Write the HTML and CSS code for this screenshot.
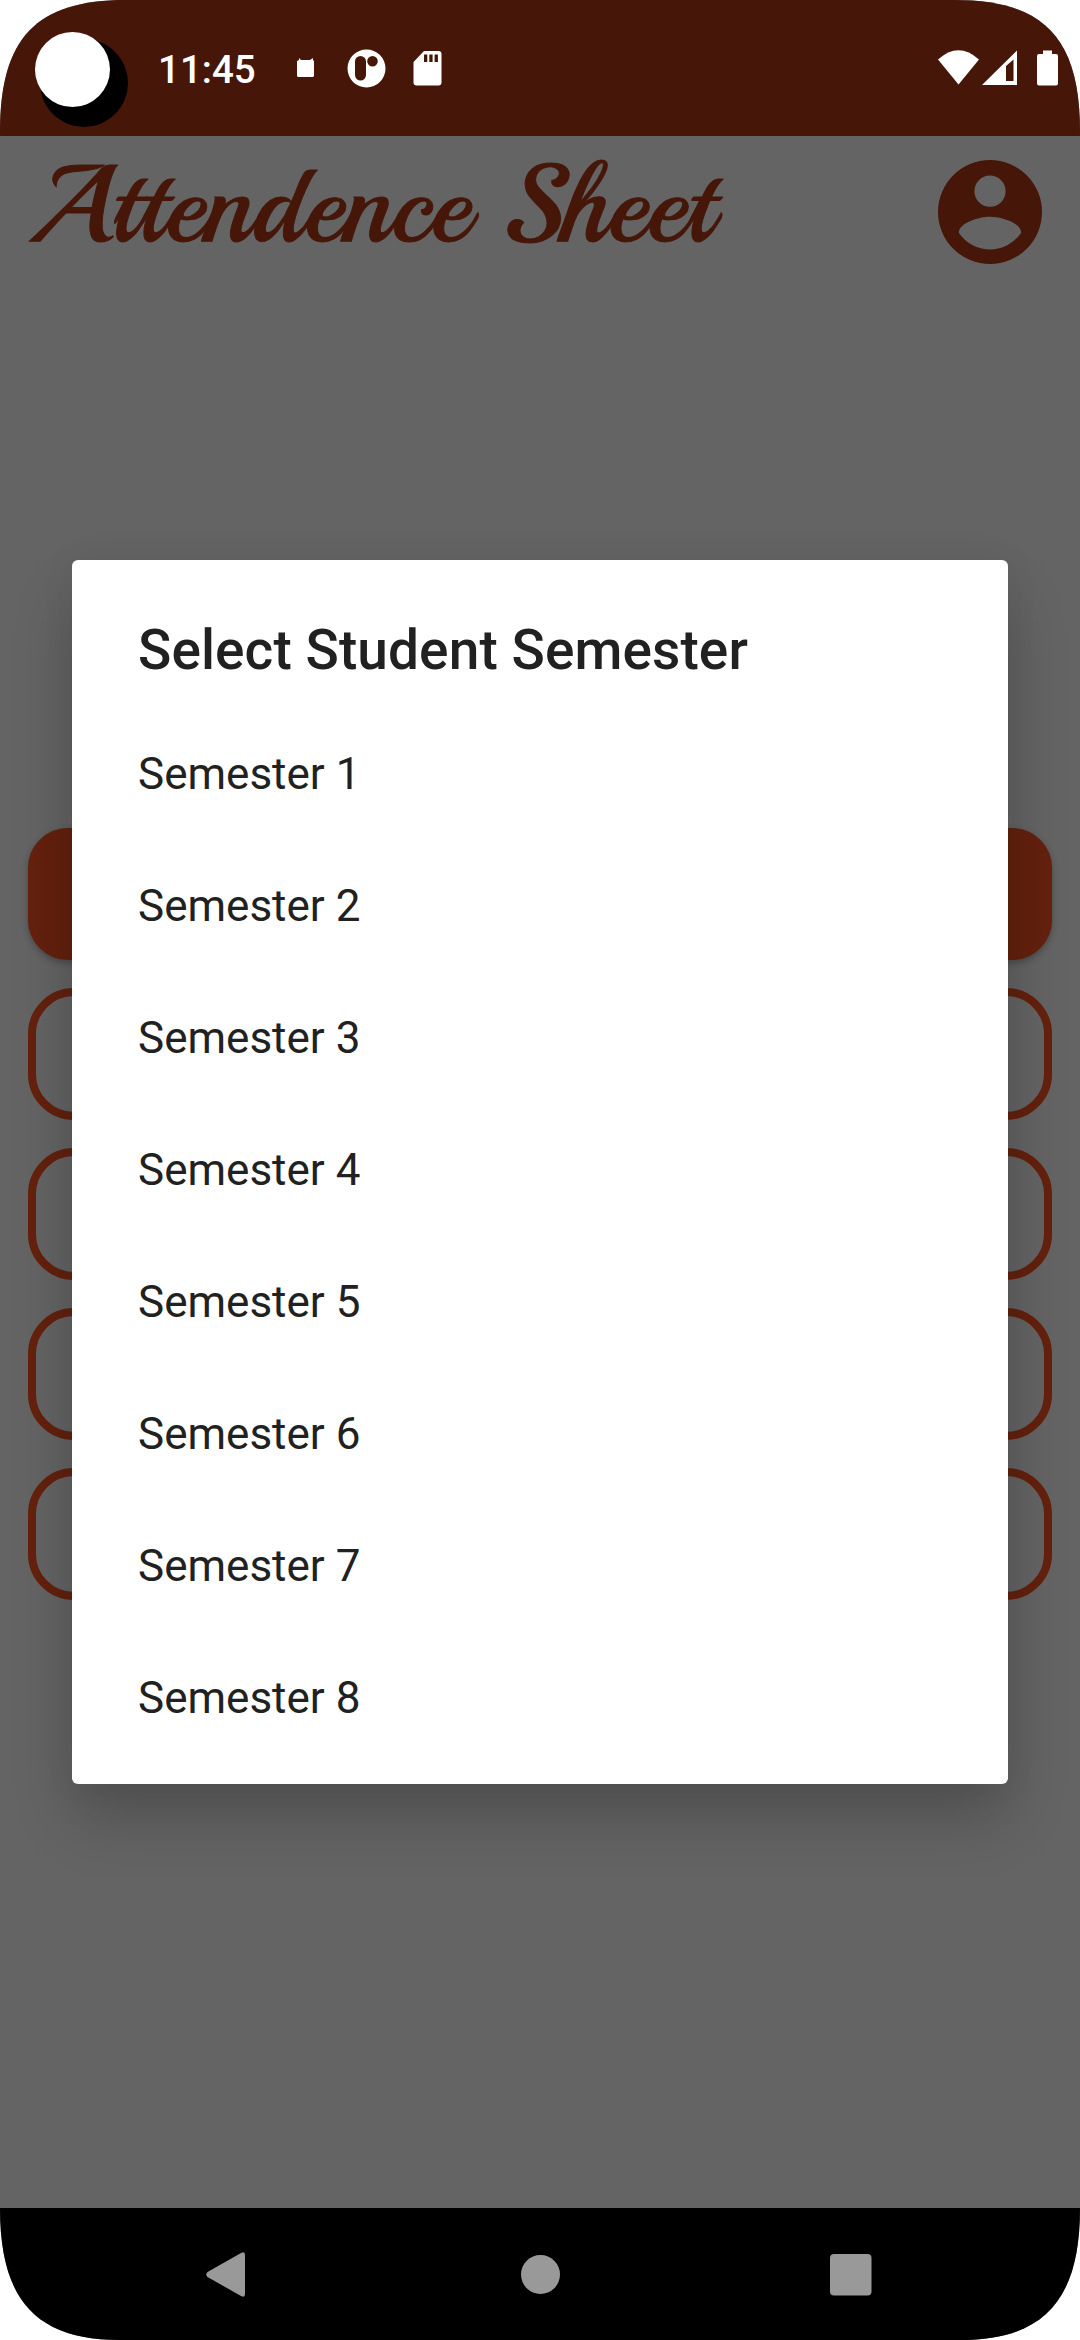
FILE: index.html
```html
<!DOCTYPE html>
<html lang="en">
<head>
<meta charset="utf-8">
<title>Attendence Sheet</title>
<link rel="stylesheet" href="styles.css">
</head>
<body>
<div class="device">
  <header class="status">
    <span class="clock">11:45</span>
    <svg class="status-left" width="180" height="136" viewBox="270 0 180 136" fill="#fff">
      <path d="M299 58l2 2h9l3-2v2l1 1v15l-1 1h-15l-1-1V61l2-1z"/>
      <path fill-rule="evenodd" d="M366.500 49.500a19 19 0 1 0 0 38a19 19 0 1 0 0-38zM360.500 56a5.500 5.500 0 0 1 5.500 5.500v13.500a5.500 5.500 0 0 1-11 0V61.500a5.500 5.500 0 0 1 5.500-5.500zM372.500 56a5.300 5.300 0 1 1 0 10.600a5.300 5.300 0 1 1 0-10.600z"/>
      <path fill-rule="evenodd" d="M424 51h14.500q3 0 3 3v28.500q0 3-3 3H416.500q-3 0-3-3V62zM424 54.500v7.500h3.300v-7.500zM429.300 54.500v7.500h3.300v-7.500zM434.600 54.500v7.500h3.300v-7.500z"/>
    </svg>
    <svg class="status-right" width="130" height="136" viewBox="930 0 130 136" fill="#fff">
      <path d="M938 59.500q20.500-18.500 41 0L958.500 84.500z"/>
      <path fill-rule="evenodd" d="M1017 50.500V85H982zM1013.500 59.500L1006 66v15h7.500z"/>
      <path d="M1043 50.500h9V54h4q2 0 2 2v27.500q0 2-2 2h-17q-2 0-2-2V56q0-2 2-2h4z"/>
    </svg>
    <span class="camera-hole"></span>
    <span class="camera-dot"></span>
  </header>
  <main class="screen">
    <div class="app-bar">
      <div class="brand">Attendence Sheet</div>
      <svg class="avatar" width="104" height="104" viewBox="2 2 20 20">
        <path fill="#461709" fill-rule="evenodd" d="M12 2a10 10 0 1 0 0 20a10 10 0 1 0 0-20zM12 5a3 3 0 1 1 0 6a3 3 0 1 1 0-6zM12 19.200a7.200 7.200 0 0 1-6-3.220c.03-1.990 4-3.080 6-3.080s5.970 1.090 6 3.080a7.200 7.200 0 0 1-6 3.220z"/>
      </svg>
    </div>
    <div class="actions">
      <div class="action filled"></div>
      <div class="action"></div>
      <div class="action"></div>
      <div class="action"></div>
      <div class="action"></div>
    </div>
  </main>
  <nav class="nav">
    <svg width="1080" height="132" viewBox="0 2208 1080 132" fill="#999">
      <path d="M207.500 2272L241 2253q4-2 4 2v39q0 4-4 2L207.500 2277q-2.500-2.500 0-5z"/>
      <circle cx="540.500" cy="2274.500" r="19.500"/>
      <rect x="830" y="2254" width="41.500" height="41.500" rx="4"/>
    </svg>
  </nav>
  <section class="dialog">
    <h1 class="dialog-title">Select Student Semester</h1>
    <ul class="options">
      <li>Semester 1</li>
      <li>Semester 2</li>
      <li>Semester 3</li>
      <li>Semester 4</li>
      <li>Semester 5</li>
      <li>Semester 6</li>
      <li>Semester 7</li>
      <li>Semester 8</li>
    </ul>
  </section>
</div>
</body>
</html>
```

FILE: styles.css
```css
* { box-sizing: border-box; }
body { margin: 0; background: #fff; font-family: Roboto, sans-serif; }
svg { display: block; }
.device {
  position: relative;
  display: flex;
  flex-direction: column;
  width: 1080px;
  height: 2340px;
  background: #646464;
  overflow: hidden;
  clip-path: path("M0 132C0 38 36 0 126 0H954C1044 0 1080 38 1080 132V2208C1080 2300 1044 2340 960 2340H120C36 2340 0 2300 0 2208Z");
}
.status {
  position: relative;
  display: flex;
  height: 136px;
  padding: 0 20px 0 158px;
  background: #461709;
}
.clock {
  width: 112px;
  font-size: 38.5px;
  font-weight: 500;
  line-height: 139px;
  color: #fff;
}
.status-right { margin-left: auto; }
.camera-hole, .camera-dot { position: absolute; border-radius: 50%; }
.camera-hole { left: 40px; top: 39px; width: 88px; height: 88px; background: #000; }
.camera-dot { left: 35px; top: 32px; width: 75px; height: 75px; background: #fff; }
.screen { flex: 1; display: flex; flex-direction: column; }
.app-bar {
  display: flex;
  justify-content: space-between;
  align-items: flex-start;
  height: 692px;
  padding: 0 38px 0 28px;
}
.brand {
  font-family: Playball, "Liberation Serif", serif;
  font-size: 110px;
  font-weight: 400;
  letter-spacing: -.2px;
  -webkit-text-stroke: 1px #461709;
  line-height: 138px;
  white-space: nowrap;
  color: #461709;
}
.avatar { margin-top: 24px; }
.actions { display: flex; flex-direction: column; gap: 28px; padding: 0 28px; }
.action { height: 132px; border: 8px solid #64210e; border-radius: 46px; }
.filled { background: #64210e; border-radius: 40px; box-shadow: 0 3px 7px rgba(0, 0, 0, .28); }
.nav { height: 132px; background: #000; }
.dialog {
  position: absolute;
  left: 72px;
  top: 560px;
  width: 936px;
  height: 1224px;
  padding: 50px 66px 0;
  border-radius: 6px;
  background: #fff;
  color: #212121;
  box-shadow: 0 36px 60px rgba(0, 0, 0, .2), 0 0 36px rgba(0, 0, 0, .05);
}
.dialog-title {
  margin: 0;
  height: 97px;
  font-size: 55px;
  font-weight: 500;
  line-height: 80px;
  letter-spacing: .09px;
  white-space: nowrap;
}
.options { margin: 0; padding: 0; list-style: none; }
.options li { height: 132px; font-size: 44px; line-height: 135px; }
```
